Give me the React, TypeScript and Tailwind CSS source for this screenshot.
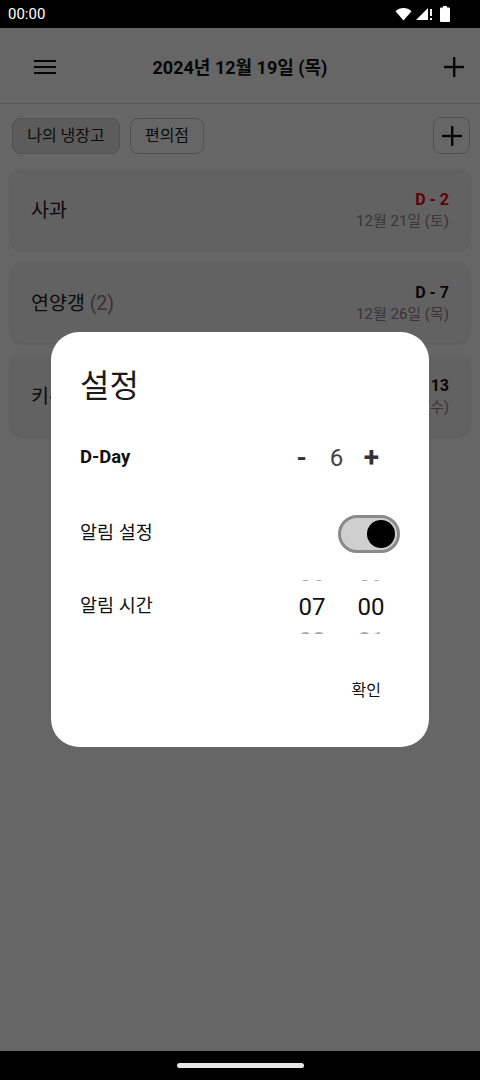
import { useState } from "react";

const font = { fontFamily: 'Roboto, "Noto Sans CJK KR", sans-serif' };

const items = [
  { name: "사과", count: 0, dday: "D - 2", date: "12월 21일 (토)", urgent: true },
  { name: "연양갱", count: 2, dday: "D - 7", date: "12월 26일 (목)", urgent: false },
  { name: "키위", count: 0, dday: "D - 13", date: "1월 1일 (수)", urgent: false },
];

const StatusBar = () => (
  <div className="h-[28px] bg-black flex items-center justify-between pl-[8px] pr-[30px] text-white">
    <span className="text-[15px] leading-none">00:00</span>
    <div className="flex items-center gap-[4px]">
      <svg width="17" height="14" viewBox="0 0 17 14">
        <path d="M0.5 4.2 C5 0 12 0 16.5 4.2 L8.5 13.5 Z" fill="white" />
      </svg>
      <svg width="18" height="14" viewBox="0 0 18 14">
        <path d="M12 1 L12 13 L0 13 Z" fill="white" />
        <rect x="14" y="2" width="2" height="7" fill="white" />
        <rect x="14" y="11" width="2" height="2" fill="white" />
      </svg>
      <svg width="10" height="16" viewBox="0 0 10 16" className="ml-[2px]">
        <rect x="3" y="0" width="4" height="2" fill="white" />
        <rect x="0" y="1.5" width="10" height="14.5" rx="1" fill="white" />
      </svg>
    </div>
  </div>
);

const PlusIcon = () => (
  <svg width="20" height="20" viewBox="0 0 20 20">
    <rect x="9" y="0" width="2.4" height="20" fill="#111" />
    <rect x="0" y="8.8" width="20" height="2.4" fill="#111" />
  </svg>
);

const NumberColumn = ({ prev, value, next }: { prev: string; value: string; next: string }) => (
  <div className="w-[40px] h-[54px] overflow-hidden">
    <div className="-mt-[24px] flex flex-col items-center">
      <span className="h-[34px] leading-[34px] text-[24px] text-[#aaaaaa]">{prev}</span>
      <span className="h-[34px] leading-[34px] text-[24px] text-[#111111]">{value}</span>
      <span className="h-[34px] leading-[34px] text-[24px] text-[#aaaaaa]">{next}</span>
    </div>
  </div>
);

const SettingsDialog = () => {
  const [dday, setDday] = useState(6);
  const [alarm, setAlarm] = useState(true);

  return (
    <div className="w-[378px] bg-white rounded-[28px] pl-[29px] pr-[29px] pt-[34px] pb-[36px] flex flex-col">
      <h2 className="text-[32px] leading-[40px] text-[#1a1a1a]">설정</h2>
      <div className="mt-[32px] h-[40px] flex items-center justify-between">
        <span className="text-[18.5px] font-bold text-[#111111]">D-Day</span>
        <div className="flex items-center mr-[11px]">
          <button onClick={() => setDday(dday - 1)} className="w-[35px] text-center text-[26px] font-bold text-[#333333] leading-none">
            -
          </button>
          <span className="w-[35px] text-center text-[24px] text-[#444444] leading-none">{dday}</span>
          <button onClick={() => setDday(dday + 1)} className="w-[35px] text-center text-[28px] font-bold text-[#333333] leading-none">
            +
          </button>
        </div>
      </div>
      <div className="mt-[36px] h-[40px] flex items-center justify-between">
        <span className="text-[18.5px] text-[#111111]">알림 설정</span>
        <button
          onClick={() => setAlarm(!alarm)}
          className={`w-[62px] h-[38px] rounded-full border-[3px] border-[#8a8a8a] bg-[#cfcfcf] flex items-center px-[2px] ${
            alarm ? "justify-end" : "justify-start"
          }`}
        >
          <span className="w-[28px] h-[28px] rounded-full bg-black block" />
        </button>
      </div>
      <div className="mt-[25px] h-[56px] flex items-center justify-between">
        <span className="text-[18.5px] text-[#111111]">알림 시간</span>
        <div className="flex items-center gap-[19px] mr-[9px]">
          <NumberColumn prev="06" value="07" next="08" />
          <NumberColumn prev="59" value="00" next="01" />
        </div>
      </div>
      <div className="mt-[36px] flex justify-end">
        <button className="h-[40px] px-[16px] mr-[3px] text-[16px] text-[#111111]">확인</button>
      </div>
    </div>
  );
};

const App = () => {
  return (
    <div className="w-[480px] h-[1080px] flex flex-col bg-white overflow-hidden" style={font}>
      <StatusBar />
      <div className="flex-1 relative">
        <header className="h-[76px] border-b border-[#dddddd] grid grid-cols-[60px_1fr_60px] items-center px-[16px] pt-[3px]">
          <div className="pl-[18px] flex items-center">
            <svg width="22" height="16" viewBox="0 0 22 16">
              <rect x="0" y="1" width="22" height="2" fill="#111" />
              <rect x="0" y="7" width="22" height="2" fill="#111" />
              <rect x="0" y="13" width="22" height="2" fill="#111" />
            </svg>
          </div>
          <h1 className="text-[18px] font-bold text-[#111111] text-center">2024년 12월 19일 (목)</h1>
          <div className="flex items-center justify-end">
            <PlusIcon />
          </div>
        </header>
        <div className="flex items-center justify-between pl-[12px] pr-[10px] mt-[13px]">
          <div className="flex items-center gap-[10px]">
            <button className="h-[36px] w-[108px] rounded-[8px] bg-[#e5e5e5] border border-[#d0d0d0] text-[16px] text-[#222222]">
              나의 냉장고
            </button>
            <button className="h-[36px] w-[74px] rounded-[8px] bg-white border border-[#c8c8c8] text-[16px] text-[#222222]">
              편의점
            </button>
          </div>
          <button className="h-[37px] w-[37px] rounded-[8px] border border-[#c8c8c8] flex items-center justify-center">
            <PlusIcon />
          </button>
        </div>
        <div className="flex flex-col gap-[12px] px-[10px] mt-[15px]">
          {items.map((item, id) => (
            <div
              key={id}
              className="h-[81px] rounded-[12px] bg-[#f4f4f4] shadow-[0_1px_3px_rgba(0,0,0,0.12)] flex items-center justify-between pl-[21px] pr-[21px] pt-[3px]"
            >
              <span className="text-[19.5px] text-[#222222]">
                {item.name}
                {item.count > 0 && <span className="text-[#888888]"> ({item.count})</span>}
              </span>
              <div className="flex flex-col items-end">
                <span className={`text-[16px] font-bold leading-[20px] ${item.urgent ? "text-[#f00000]" : "text-[#111111]"}`}>
                  {item.dday}
                </span>
                <span className="text-[15px] leading-[23px] text-[#8a8a8a]">{item.date}</span>
              </div>
            </div>
          ))}
        </div>
        <div className="absolute inset-0 bg-black/60 flex items-center justify-center">
          <SettingsDialog />
        </div>
      </div>
      <div className="h-[29px] bg-black flex items-center justify-center">
        <div className="w-[127px] h-[5px] rounded-full bg-[#e8e8e8]" />
      </div>
    </div>
  );
};

export default App;
